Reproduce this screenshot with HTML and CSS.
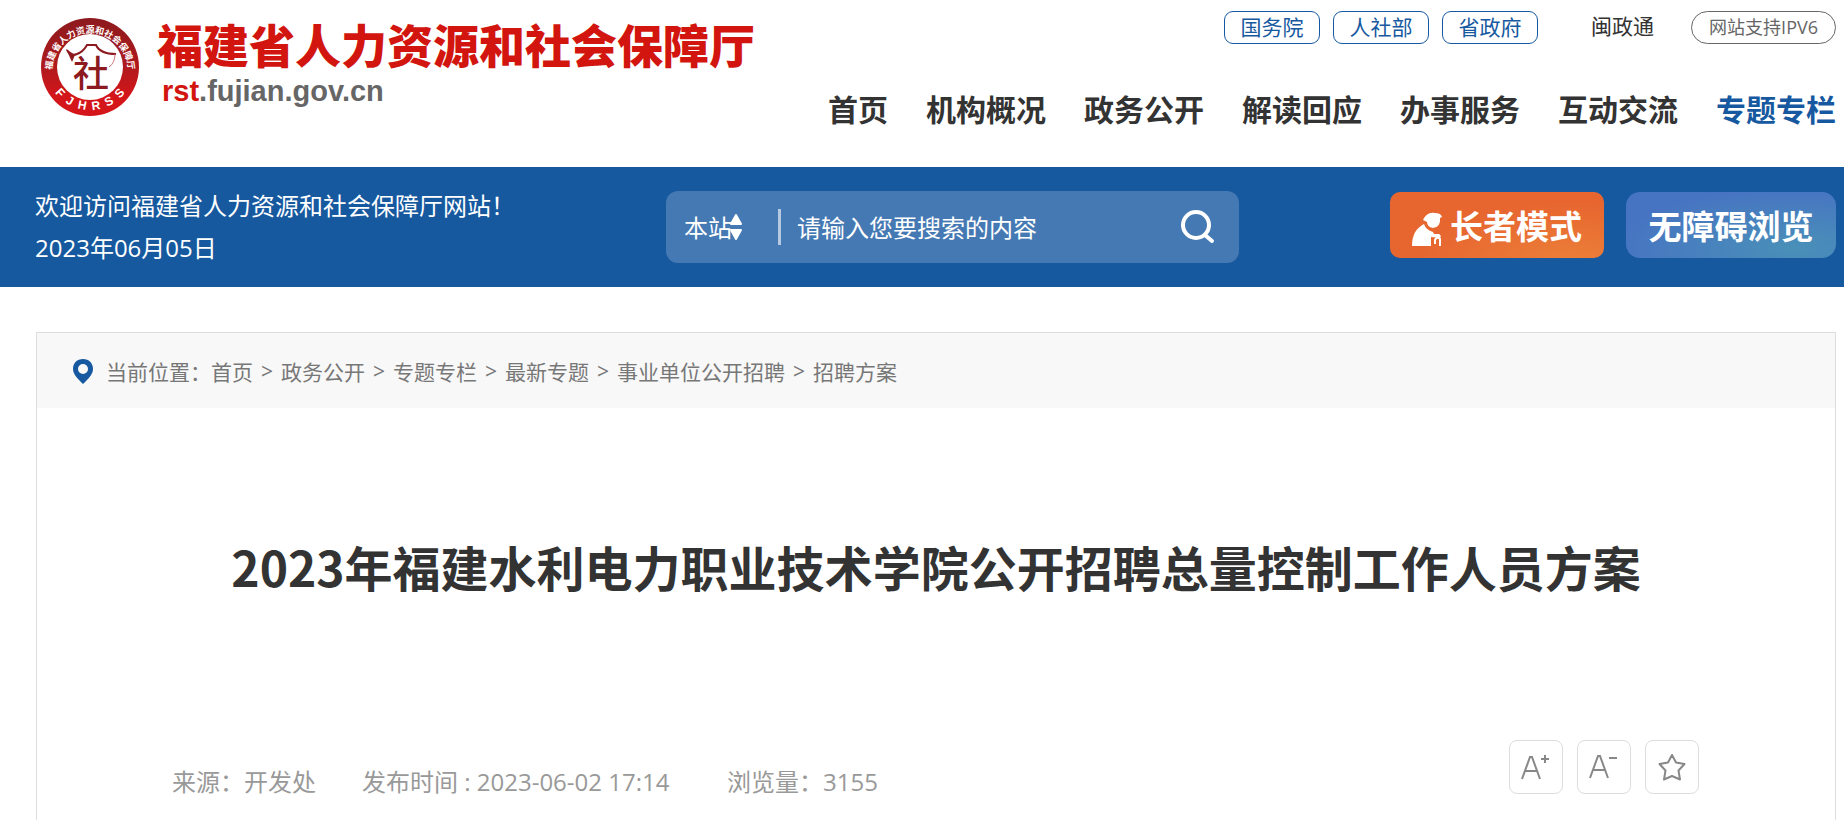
FILE: index.html
```html
<!DOCTYPE html>
<html lang="zh-CN">
<head>
    <meta charset="UTF-8">
    <title>2023年福建水利电力职业技术学院公开招聘总量控制工作人员方案</title>
    <link rel="stylesheet" href="styles.css">
</head>
<body>
<header class="header">
    <a class="logo" href="#">
        <svg class="logo-badge" viewBox="0 0 100 100" aria-hidden="true">
            <defs>
                <linearGradient id="ring" x1="0" y1="0" x2="0" y2="1">
                    <stop offset="0" stop-color="#8c1a1e"/>
                    <stop offset="0.5" stop-color="#b01a1d"/>
                    <stop offset="0.8" stop-color="#d4151a"/>
                </linearGradient>
                <path id="arc-top" d="M12 54 A38 38 0 1 1 88 54"/>
                <path id="arc-bottom" d="M9 65 A44 44 0 0 0 91 65"/>
            </defs>
            <circle cx="50" cy="50" r="49" fill="url(#ring)"/>
            <circle cx="50" cy="50" r="33" fill="#fff"/>
            <text class="ring-cn"><textPath href="#arc-top" startOffset="50%">福建省人力资源和社会保障厅</textPath></text>
            <text class="ring-en"><textPath href="#arc-bottom" startOffset="50%">F&#160;&#160;J&#160;&#160;H&#160;&#160;R&#160;&#160;S&#160;&#160;S</textPath></text>
            <path d="M27 33 Q31 40 37 37 Q43 35 47 28 H56 Q60 37 76 37" fill="none" stroke="#8c1a1e" stroke-width="2"/>
            <path d="M26 32 L35 38 L32 45 Z" fill="#8c1a1e"/>
            <path d="M75 37 Q75 46 69 50" fill="none" stroke="#c77" stroke-width="1"/>
            <text class="ring-she" x="51" y="70">社</text>
        </svg>
        <span class="logo-text">
            <span class="logo-name">福建省人力资源和社会保障厅</span>
            <span class="logo-url"><b>rst</b>.fujian.gov.cn</span>
        </span>
    </a>
    <div class="header-right">
        <div class="top-links">
            <a class="pill" href="#">国务院</a>
            <a class="pill" href="#">人社部</a>
            <a class="pill" href="#">省政府</a>
            <a class="mzt" href="#">闽政通</a>
            <a class="ipv6" href="#">网站支持IPV6</a>
        </div>
        <nav class="nav">
            <a href="#">首页</a>
            <a href="#">机构概况</a>
            <a href="#">政务公开</a>
            <a href="#">解读回应</a>
            <a href="#">办事服务</a>
            <a href="#">互动交流</a>
            <a class="active" href="#">专题专栏</a>
        </nav>
    </div>
</header>

<div class="banner">
    <div class="welcome">
        <p>欢迎访问福建省人力资源和社会保障厅网站！</p>
        <p>2023年06月05日</p>
    </div>
    <form class="search" action="#">
        <div class="range">
            <select aria-label="搜索范围">
                <option>本站</option>
            </select>
            <svg viewBox="0 0 12 26" aria-hidden="true">
                <path d="M6 1 L11 10 H1 Z M6 25 L11 16 H1 Z" fill="#fff" stroke="#fff" stroke-width="2" stroke-linejoin="round"/>
            </svg>
        </div>
        <input type="text" aria-label="搜索内容" placeholder="请输入您要搜索的内容">
        <button type="submit" aria-label="搜索">
            <svg viewBox="0 0 34 34" fill="none" stroke="#fff" stroke-width="4" stroke-linecap="round" aria-hidden="true">
                <circle cx="15" cy="15" r="13"/>
                <path d="M24 25 L31 31"/>
            </svg>
        </button>
    </form>
    <div class="modes">
        <button class="elder" type="button">
            <svg viewBox="0 0 30 34" fill="#fff" aria-hidden="true">
                <path d="M12 6 Q16 0 23 1 Q29 1 30 5 L28 6 Q29 15 21 16 Q15 15 15 10 L11 8 Z"/>
                <path d="M0 34 Q0 18 12 12 Q14 18 21 20 L22 22 L27 22 Q30 24 28 26 L19 25 V34 Z"/>
                <path d="M23 32 V28 Q25 24 28 27 V34" fill="none" stroke="#fff" stroke-width="2"/>
            </svg>
            长者模式
        </button>
        <button class="barrier-free" type="button">无障碍浏览</button>
    </div>
</div>

<main class="article">
    <div class="crumbs">
        <svg viewBox="0 0 22 26" aria-hidden="true">
            <path fill-rule="evenodd" fill="#1659a0" d="M11 1 C17 1 21 5 21 11 C21 17 15 22 11 26 C7 22 1 17 1 11 C1 5 5 1 11 1 Z M11 6 A5 5 0 1 0 11 16 A5 5 0 1 0 11 6 Z"/>
        </svg>
        <span>当前位置：</span>
        <a href="#">首页</a><i>&gt;</i>
        <a href="#">政务公开</a><i>&gt;</i>
        <a href="#">专题专栏</a><i>&gt;</i>
        <a href="#">最新专题</a><i>&gt;</i>
        <a href="#">事业单位公开招聘</a><i>&gt;</i>
        <a href="#">招聘方案</a>
    </div>
    <h1>2023年福建水利电力职业技术学院公开招聘总量控制工作人员方案</h1>
    <div class="meta">
        <span>来源：开发处</span>
        <span class="time">发布时间 : 2023-06-02 17:14</span>
        <span>浏览量：3155</span>
        <div class="tools">
            <button type="button" aria-label="放大字体">
                <svg viewBox="0 0 30 30" aria-hidden="true">
                    <path d="M1 27 L9 5 H11 L19 27 M4 19 H16"/>
                    <path d="M20 7 H28 M24 3 V11"/>
                </svg>
            </button>
            <button type="button" aria-label="缩小字体">
                <svg viewBox="0 0 30 30" aria-hidden="true">
                    <path d="M1 26 L9 4 H11 L19 26 M4 18 H16"/>
                    <path d="M20 6 H28"/>
                </svg>
            </button>
            <button type="button" aria-label="收藏">
                <svg viewBox="0 0 30 30" aria-hidden="true">
                    <path stroke-linejoin="round" d="M15 3 L19 10.500 L27.500 12 L21.500 18.500 L23 27.500 L15 24 L7 27.500 L8.500 18.500 L2.500 12 L11 10.500 Z"/>
                </svg>
            </button>
        </div>
    </div>
</main>
</body>
</html>
```

FILE: styles.css
```css
* {
    box-sizing: border-box;
}

body {
    margin: 0;
    background: #fff;
    color: #333;
    font-family: "Open Sans", "Noto Sans CJK SC", sans-serif;
}

a {
    color: inherit;
    text-decoration: none;
}

p {
    margin: 0;
}

button, input, select {
    font-family: inherit;
    border: none;
    padding: 0;
}

button {
    cursor: pointer;
}

/* 头部 */
.header {
    display: flex;
    justify-content: space-between;
    align-items: flex-start;
    padding: 11px 8px 37px 35px;
}

.logo {
    display: flex;
    padding-top: 6px;
    padding-left: 5px;
}

.logo-badge {
    width: 100px;
    height: 100px;
}

.ring-cn {
    font: bold 9px "Noto Sans CJK SC", sans-serif;
    fill: #fff;
    text-anchor: middle;
}

.ring-en {
    font: bold 12px "Liberation Sans", sans-serif;
    fill: #fff;
    text-anchor: middle;
}

.ring-she {
    font: 500 36px "Noto Sans CJK SC", sans-serif;
    fill: #8c1a1e;
    text-anchor: middle;
}

.logo-text {
    display: flex;
    flex-direction: column;
    padding-left: 17px;
}

.logo-name {
    color: #d2160f;
    font-size: 46px;
    font-weight: 900;
    line-height: 56px;
    white-space: nowrap;
}

.logo-url {
    padding-left: 5px;
    color: #666;
    font: bold 29px/36px "Liberation Sans", sans-serif;
}

.logo-url b {
    color: #d2160f;
}

.header-right {
    display: flex;
    flex-direction: column;
    align-items: flex-end;
}

.top-links {
    display: flex;
    gap: 13px;
    font-size: 21px;
    line-height: 31px;
}

.pill {
    width: 96px;
    border: 1px solid #1659a0;
    border-radius: 9px;
    color: #1659a0;
    text-align: center;
}

.mzt {
    margin: 0 24px 0 40px;
}

.ipv6 {
    padding: 0 17px;
    border: 1px solid #666;
    border-radius: 17px;
    color: #666;
    font-size: 18px;
}

.nav {
    display: flex;
    gap: 38px;
    margin-top: 46px;
    font-size: 30px;
    font-weight: bold;
    line-height: 40px;
    white-space: nowrap;
}

.nav .active {
    color: #1659a0;
}

/* 搜索栏 */
.banner {
    display: flex;
    align-items: center;
    height: 120px;
    padding: 0 8px 0 35px;
    background: #16599f;
    color: #fff;
}

.welcome {
    flex: 1;
    font-size: 24px;
    line-height: 42px;
    white-space: nowrap;
}

.search {
    display: flex;
    align-items: center;
    width: 573px;
    height: 72px;
    margin-left: 34px;
    padding: 0 24px 0 18px;
    border-radius: 12px;
    background: #4579b3;
}

.range {
    position: relative;
    width: 97px;
    height: 36px;
    border-right: 3px solid #b5c9e1;
}

.range select {
    appearance: none;
    width: 80px;
    height: 36px;
    background: none;
    color: #fff;
    font-size: 24px;
}

.range svg {
    position: absolute;
    top: 5px;
    left: 46px;
    width: 12px;
    height: 26px;
    pointer-events: none;
}

.search input {
    flex: 1;
    min-width: 0;
    height: 40px;
    margin-left: 16px;
    background: none;
    color: #fff;
    font-size: 24px;
}

.search input::placeholder {
    color: #fff;
    opacity: 1;
}

.search button {
    width: 34px;
    height: 34px;
    background: none;
}

.modes {
    flex: 1;
    display: flex;
    justify-content: flex-end;
    gap: 22px;
    padding-bottom: 4px;
}

.modes button {
    display: flex;
    align-items: center;
    justify-content: center;
    height: 66px;
    color: #fff;
    font-size: 33px;
    font-weight: bold;
    white-space: nowrap;
}

.modes .elder {
    width: 214px;
    gap: 8px;
    border-radius: 10px;
    background: radial-gradient(ellipse at 85% 110%, #ec8038, #e76630 60%);
}

.elder svg {
    width: 30px;
    height: 34px;
    margin-top: 8px;
}

.modes .barrier-free {
    width: 210px;
    border-radius: 14px;
    background: radial-gradient(ellipse at 80% 85%, #4990b8, #4774c2 75%);
}

/* 正文 */
.article {
    margin: 45px 8px 0 36px;
    border: 1px solid #ddd;
    border-bottom: none;
}

.crumbs {
    display: flex;
    align-items: center;
    height: 75px;
    padding-left: 35px;
    background: #f8f8f8;
    color: #777;
    font-size: 21px;
}

.crumbs svg {
    width: 22px;
    height: 26px;
    margin-right: 12px;
}

.crumbs i {
    width: 28px;
    font-style: normal;
    text-align: center;
}

h1 {
    margin: 126px 0 0;
    font: bold 48px/64px "Noto Sans CJK SC", sans-serif;
    text-align: center;
}

.meta {
    display: flex;
    gap: 46px;
    margin-top: 142px;
    padding: 0 136px 25px 135px;
    color: #999;
    font-size: 24px;
    line-height: 84px;
}

.meta .time {
    min-width: 319px;
}

.tools {
    display: flex;
    gap: 14px;
    margin-left: auto;
}

.tools button {
    display: flex;
    align-items: center;
    justify-content: center;
    width: 54px;
    height: 54px;
    border: 1px solid #ddd;
    border-radius: 8px;
    background: #fff;
}

.tools svg {
    width: 30px;
    height: 30px;
    fill: none;
    stroke: #888;
    stroke-width: 2;
}
```
